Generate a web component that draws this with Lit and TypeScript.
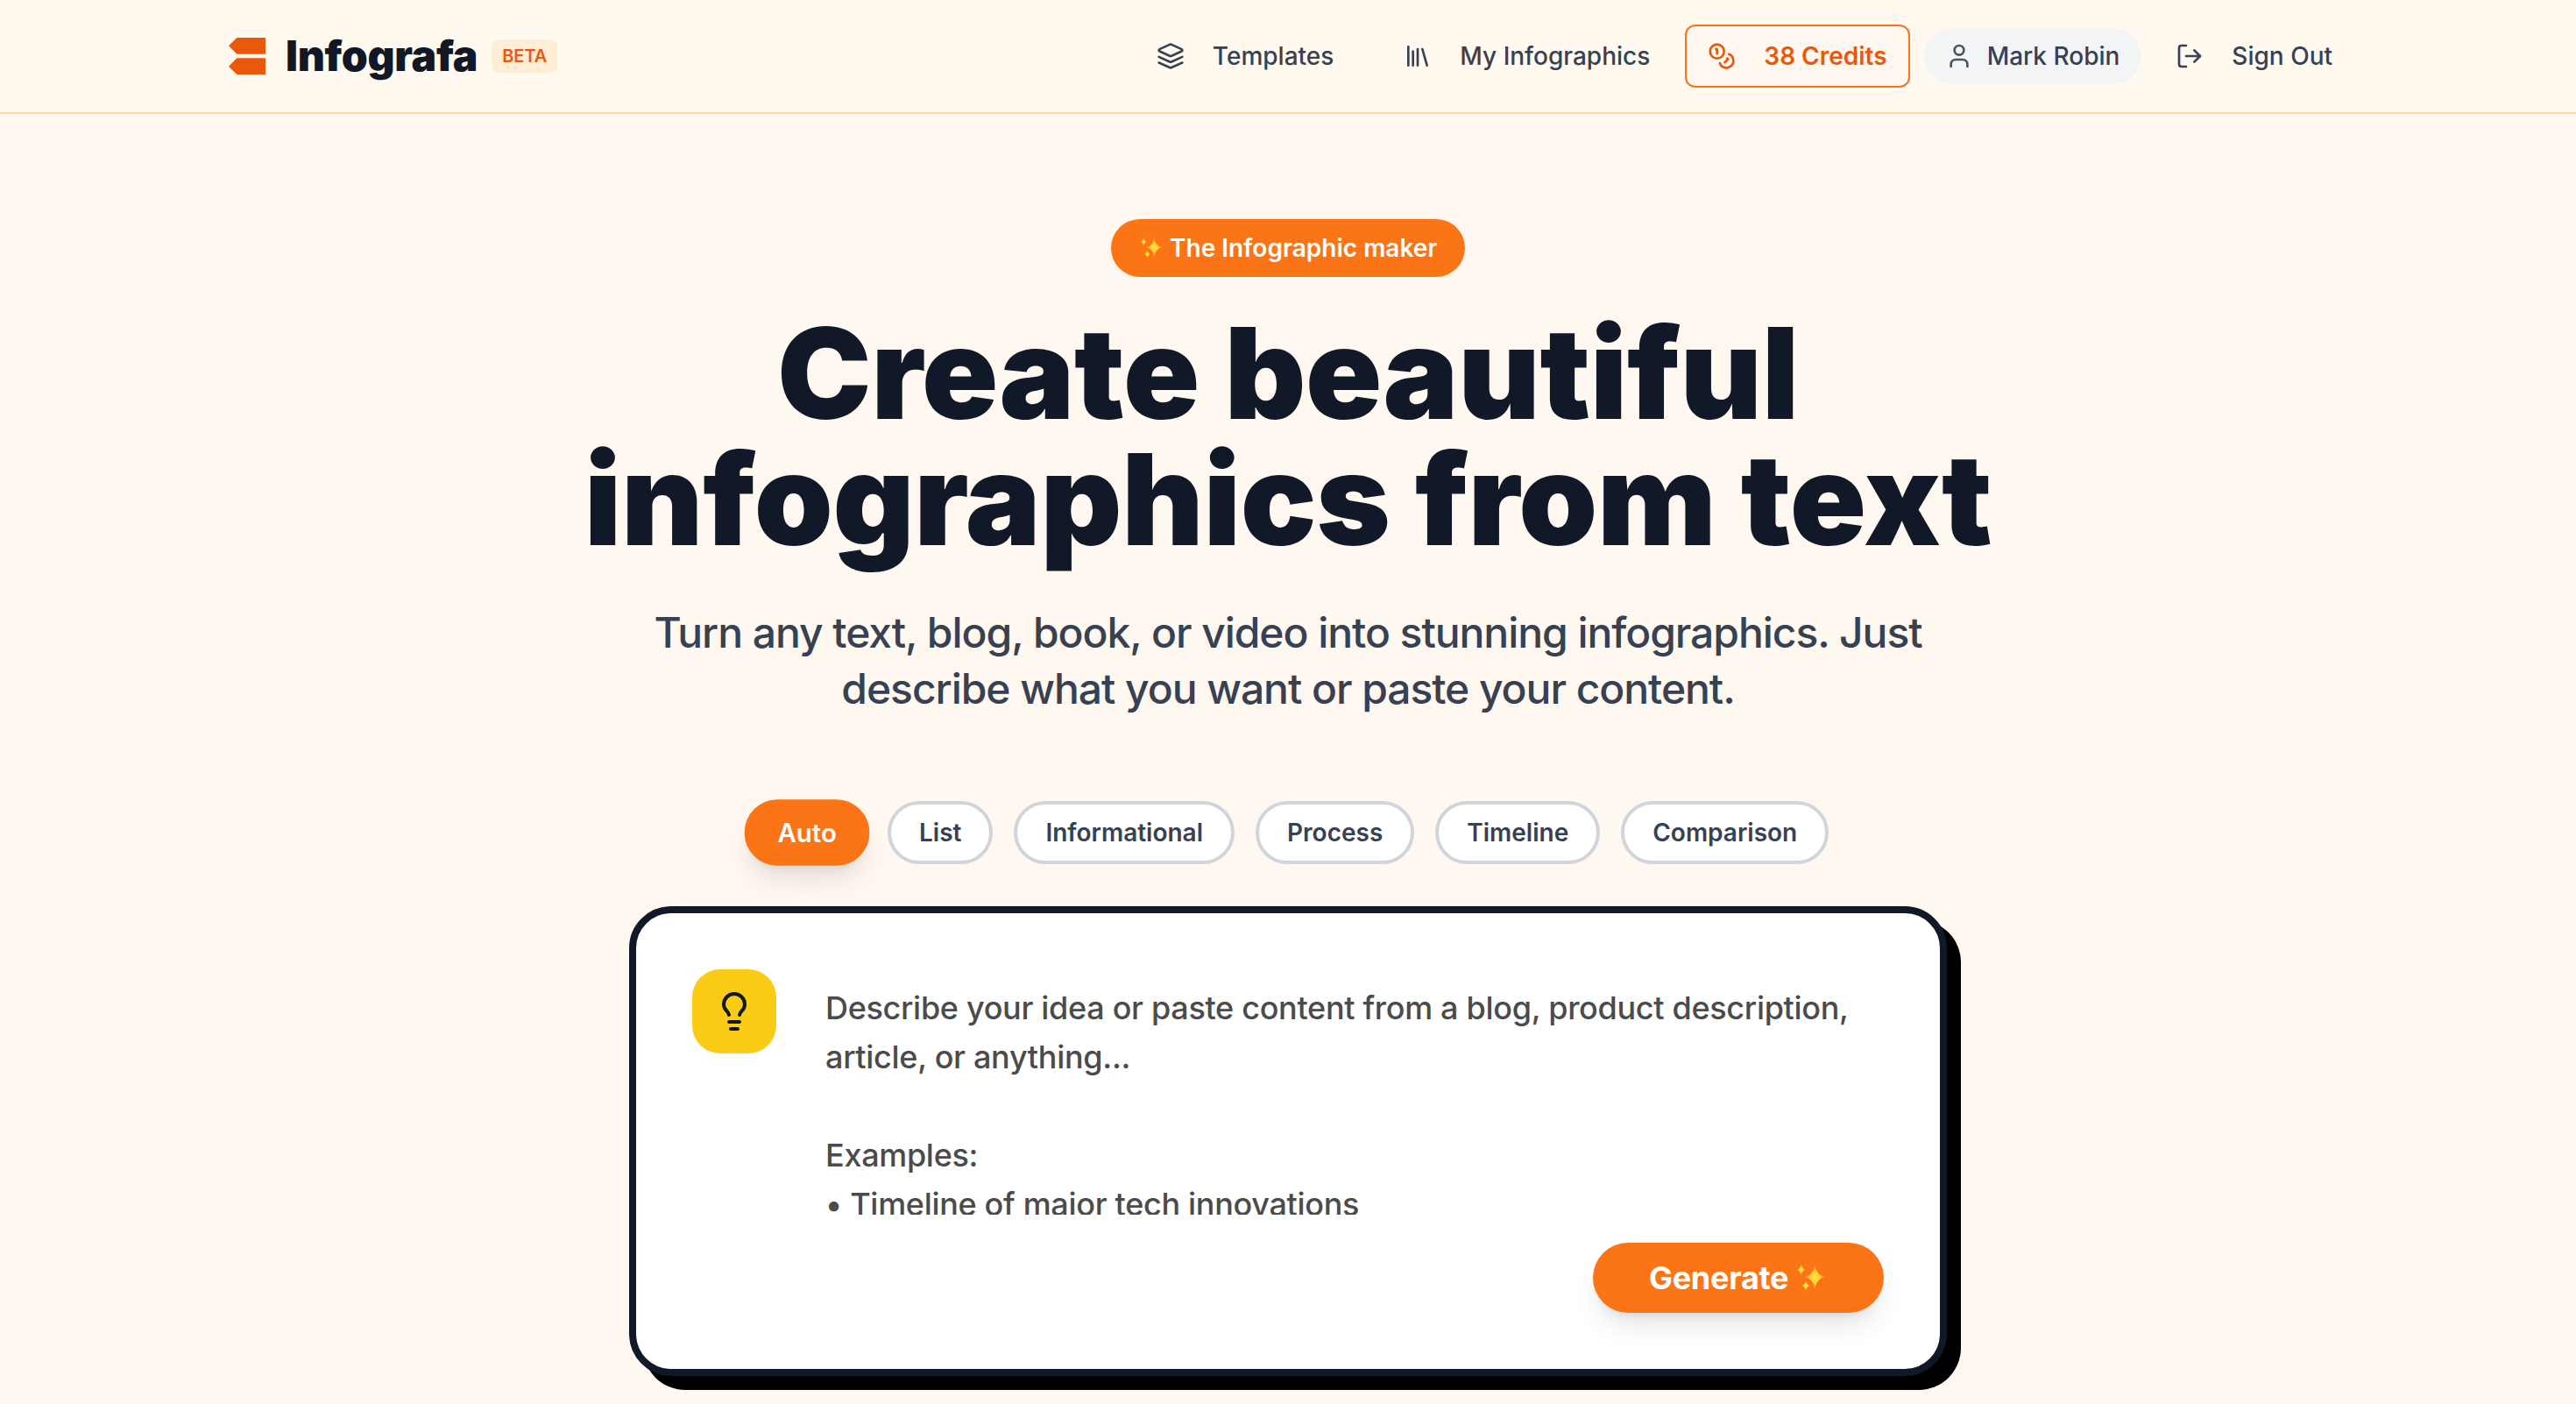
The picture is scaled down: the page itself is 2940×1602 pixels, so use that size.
import { LitElement, html, css, svg } from "lit";
import { customElement, property, state } from "lit/decorators.js";
import { classMap } from "lit/directives/class-map.js";

const ICONS = {
  layers: svg`
    <path d="m12.83 2.18a2 2 0 0 0-1.66 0L2.6 6.08a1 1 0 0 0 0 1.83l8.58 3.91a2 2 0 0 0 1.66 0l8.58-3.9a1 1 0 0 0 0-1.83Z" />
    <path d="m22 12.65-9.17 4.16a2 2 0 0 1-1.66 0L2 12.65" />
    <path d="m22 17.65-9.17 4.16a2 2 0 0 1-1.66 0L2 17.65" />
  `,
  library: svg`
    <path d="m16 6 4 14" />
    <path d="M12 6v14" />
    <path d="M8 8v12" />
    <path d="M4 4v16" />
  `,
  coins: svg`
    <circle cx="8" cy="8" r="6" />
    <path d="M18.09 10.37A6 6 0 1 1 10.34 18" />
    <path d="M7 6h1v4" />
    <path d="m16.71 13.88.7.71-2.82 2.82" />
  `,
  user: svg`
    <path d="M19 21v-2a4 4 0 0 0-4-4H9a4 4 0 0 0-4 4v2" />
    <circle cx="12" cy="7" r="4" />
  `,
  logout: svg`
    <path d="M9 21H5a2 2 0 0 1-2-2V5a2 2 0 0 1 2-2h4" />
    <polyline points="16 17 21 12 16 7" />
    <line x1="21" x2="9" y1="12" y2="12" />
  `,
  bulb: svg`
    <path d="M15 14c.2-1 .7-1.7 1.5-2.5 1-.9 1.5-2.2 1.5-3.5A6 6 0 0 0 6 8c0 1 .2 2.2 1.5 3.5.7.7 1.3 1.5 1.5 2.5" />
    <path d="M9 18h6" />
    <path d="M10 22h4" />
  `,
};

@customElement("line-icon")
export class LineIcon extends LitElement {
  @property({ type: String }) name: keyof typeof ICONS = "layers";

  static styles = css`
    :host {
      display: block;
      flex: none;
      width: 32px;
      height: 32px;
    }

    svg {
      display: block;
      width: 100%;
      height: 100%;
      fill: none;
      stroke: currentColor;
      stroke-width: 2;
      stroke-linecap: round;
      stroke-linejoin: round;
    }
  `;

  render() {
    return html`<svg viewBox="0 0 24 24">${ICONS[this.name]}</svg>`;
  }
}

@customElement("sparkles-icon")
export class SparklesIcon extends LitElement {
  static styles = css`
    :host {
      display: block;
      flex: none;
    }

    svg {
      display: block;
      width: 100%;
      height: 100%;
    }
  `;

  render() {
    return html`
      <svg viewBox="0 0 34 34">
        <defs>
          <radialGradient id="glow">
            <stop offset="0" stop-color="#ffe83c" />
            <stop offset="0.4" stop-color="#ffd836" />
            <stop offset="1" stop-color="#ffa62a" stop-opacity="0.4" />
          </radialGradient>
        </defs>
        <g fill="url(#glow)">
          <path d="M21.3 0.5Q22.3 14.9 34 16Q22.3 17.1 21.3 31.8Q20.3 17.1 8.6 16Q20.3 14.9 21.3 0.5Z" />
          <path d="M21.3 8.5Q22.6 14.7 27.3 16Q22.6 17.3 21.3 23.5Q20 17.3 15.3 16Q20 14.7 21.3 8.5Z" />
          <path d="M5.7 0.5Q6.4 7 10.9 7.7Q6.4 8.4 5.7 14.9Q5 8.4 0.5 7.7Q5 7 5.7 0.5Z" />
          <path d="M11 19.4Q11.7 25.3 16.2 26Q11.7 26.7 11 32.8Q10.3 26.7 5.8 26Q10.3 25.3 11 19.4Z" />
        </g>
      </svg>
    `;
  }
}

@customElement("site-header")
export class SiteHeader extends LitElement {
  static styles = css`
    :host {
      display: block;
      background: #fff9ef;
      border-bottom: 2px solid #fdd7a6;
    }

    .bar {
      box-sizing: border-box;
      display: flex;
      align-items: center;
      justify-content: space-between;
      width: 2560px;
      height: 128px;
      margin: 0 auto;
      padding: 0 64px;
    }

    .brand,
    .nav,
    .link {
      display: flex;
      align-items: center;
    }

    .logo {
      width: 56px;
      height: 56px;
      margin-right: 16px;
      fill: #ea580c;
    }

    .name {
      font-size: 48px;
      font-weight: 900;
      line-height: 64px;
      letter-spacing: -0.3px;
      color: #111827;
    }

    .beta {
      margin-left: 16px;
      padding: 4px 12px;
      border-radius: 8px;
      background: #ffedd5;
      color: #ea580c;
      font-size: 20px;
      font-weight: 600;
      line-height: 30px;
    }

    .nav {
      gap: 16px;
    }

    .link {
      box-sizing: border-box;
      height: 72px;
      padding: 0 24px;
      gap: 32px;
      color: #374151;
      font-size: 28px;
      font-weight: 500;
      line-height: 40px;
      white-space: nowrap;
    }

    .templates {
      margin-right: 16px;
    }

    .credits {
      border: 2px solid #fb7415;
      border-radius: 12px;
      background: #fff8f0;
      color: #ea580c;
      font-weight: 600;
    }

    .account {
      height: 64px;
      gap: 16px;
      border-radius: 32px;
      background: #f3f4f6;
    }

    .account line-icon {
      color: #4b5563;
    }
  `;

  render() {
    return html`
      <div class="bar">
        <div class="brand">
          <svg class="logo" viewBox="0 0 24 24">
            <path d="M7 3h14v8H7L3 7Z" />
            <path d="M7 13h14v8H7L3 17Z" />
          </svg>
          <span class="name">Infografa</span>
          <span class="beta">BETA</span>
        </div>
        <nav class="nav">
          <a class="link templates"><line-icon name="layers"></line-icon>Templates</a>
          <a class="link"><line-icon name="library"></line-icon>My Infographics</a>
          <a class="link credits"><line-icon name="coins"></line-icon>38 Credits</a>
          <a class="link account"><line-icon name="user"></line-icon>Mark Robin</a>
          <a class="link"><line-icon name="logout"></line-icon>Sign Out</a>
        </nav>
      </div>
    `;
  }
}

@customElement("type-tabs")
export class TypeTabs extends LitElement {
  @state() private selected = "Auto";

  private types = ["Auto", "List", "Informational", "Process", "Timeline", "Comparison"];

  static styles = css`
    :host {
      display: flex;
      justify-content: center;
      gap: 24px;
    }

    .tab {
      box-sizing: border-box;
      height: 72px;
      margin: 0;
      padding: 0 32px;
      border: 4px solid #d1d5db;
      border-radius: 36px;
      background: #ffffff;
      color: #374151;
      font: 600 28px/40px Inter, sans-serif;
    }

    .active {
      border-color: #fb7415;
      background: #fb7415;
      color: #ffffff;
      transform: scale(1.05);
      box-shadow: 0 20px 30px -6px rgb(0 0 0 / 0.1), 0 8px 12px -8px rgb(0 0 0 / 0.1);
    }
  `;

  render() {
    return this.types.map(
      (type) => html`
        <button
          class=${classMap({ tab: true, active: type === this.selected })}
          @click=${() => (this.selected = type)}
        >${type}</button>
      `
    );
  }
}

@customElement("prompt-card")
export class PromptCard extends LitElement {
  static styles = css`
    :host {
      box-sizing: border-box;
      display: block;
      width: 1504px;
      padding: 64px;
      border: 8px solid #111827;
      border-radius: 48px;
      background: #ffffff;
      box-shadow: 16px 16px 0 #000000;
    }

    .row {
      display: flex;
      align-items: flex-start;
      gap: 32px;
    }

    .tile {
      display: flex;
      align-items: center;
      justify-content: center;
      width: 96px;
      height: 96px;
      border-radius: 32px;
      background: #facc15;
      color: #111827;
    }

    .tile line-icon {
      width: 48px;
      height: 48px;
    }

    .prompt {
      box-sizing: border-box;
      flex: 1;
      height: 280px;
      padding: 16px 24px 0;
      overflow: hidden;
      color: #4b4b4b;
      font-size: 36px;
      font-weight: 500;
      line-height: 56px;
      letter-spacing: -0.31px;
      white-space: pre-line;
    }

    .actions {
      display: flex;
      justify-content: flex-end;
      margin-top: 32px;
    }

    .generate {
      box-sizing: border-box;
      display: flex;
      align-items: center;
      width: 332px;
      height: 80px;
      margin: 0;
      padding: 0 64px;
      border: 0;
      border-radius: 40px;
      background: #fb7415;
      color: #ffffff;
      font: 700 36px/56px Inter, sans-serif;
      letter-spacing: -0.3px;
      box-shadow: 0 20px 30px -6px rgb(0 0 0 / 0.1), 0 8px 12px -8px rgb(0 0 0 / 0.1);
    }

    .generate sparkles-icon {
      width: 34px;
      height: 34px;
      margin-left: 9px;
    }
  `;

  render() {
    return html`
      <div class="row">
        <div class="tile"><line-icon name="bulb"></line-icon></div>
        <div class="prompt">Describe your idea or paste content from a blog, product description, article, or anything...

Examples:
• Timeline of major tech innovations</div>
      </div>
      <div class="actions">
        <button class="generate">Generate<sparkles-icon></sparkles-icon></button>
      </div>
    `;
  }
}

@customElement("app-root")
export class AppRoot extends LitElement {
  static styles = css`
    :host {
      display: block;
      height: 1602px;
      overflow: hidden;
      background: #fff8f0;
      font-family: Inter, sans-serif;
    }

    .hero {
      display: flex;
      flex-direction: column;
      align-items: center;
      padding-top: 120px;
    }

    .badge {
      box-sizing: border-box;
      display: flex;
      align-items: center;
      width: 404px;
      height: 66px;
      padding-left: 33px;
      border-radius: 33px;
      background: #fb7415;
      color: #ffffff;
      font-size: 28px;
      font-weight: 600;
      line-height: 40px;
      white-space: nowrap;
    }

    .badge sparkles-icon {
      width: 26px;
      height: 26px;
      margin-right: 8px;
    }

    .title {
      width: 1792px;
      margin: 38px 0 48px;
      color: #111827;
      font-size: 144px;
      font-weight: 900;
      line-height: 144px;
      letter-spacing: -0.28px;
      text-align: center;
    }

    .lead {
      width: 1536px;
      margin: 0;
      color: #374151;
      font-size: 48px;
      font-weight: 500;
      line-height: 64px;
      letter-spacing: -1.05px;
      text-align: center;
    }

    type-tabs {
      margin: 96px 0 48px;
    }
  `;

  render() {
    return html`
      <site-header></site-header>
      <main class="hero">
        <div class="badge"><sparkles-icon></sparkles-icon>The Infographic maker</div>
        <h1 class="title">Create beautiful<br />infographics from text</h1>
        <p class="lead">
          Turn any text, blog, book, or video into stunning infographics. Just<br />
          describe what you want or paste your content.
        </p>
        <type-tabs></type-tabs>
        <prompt-card></prompt-card>
      </main>
    `;
  }
}
